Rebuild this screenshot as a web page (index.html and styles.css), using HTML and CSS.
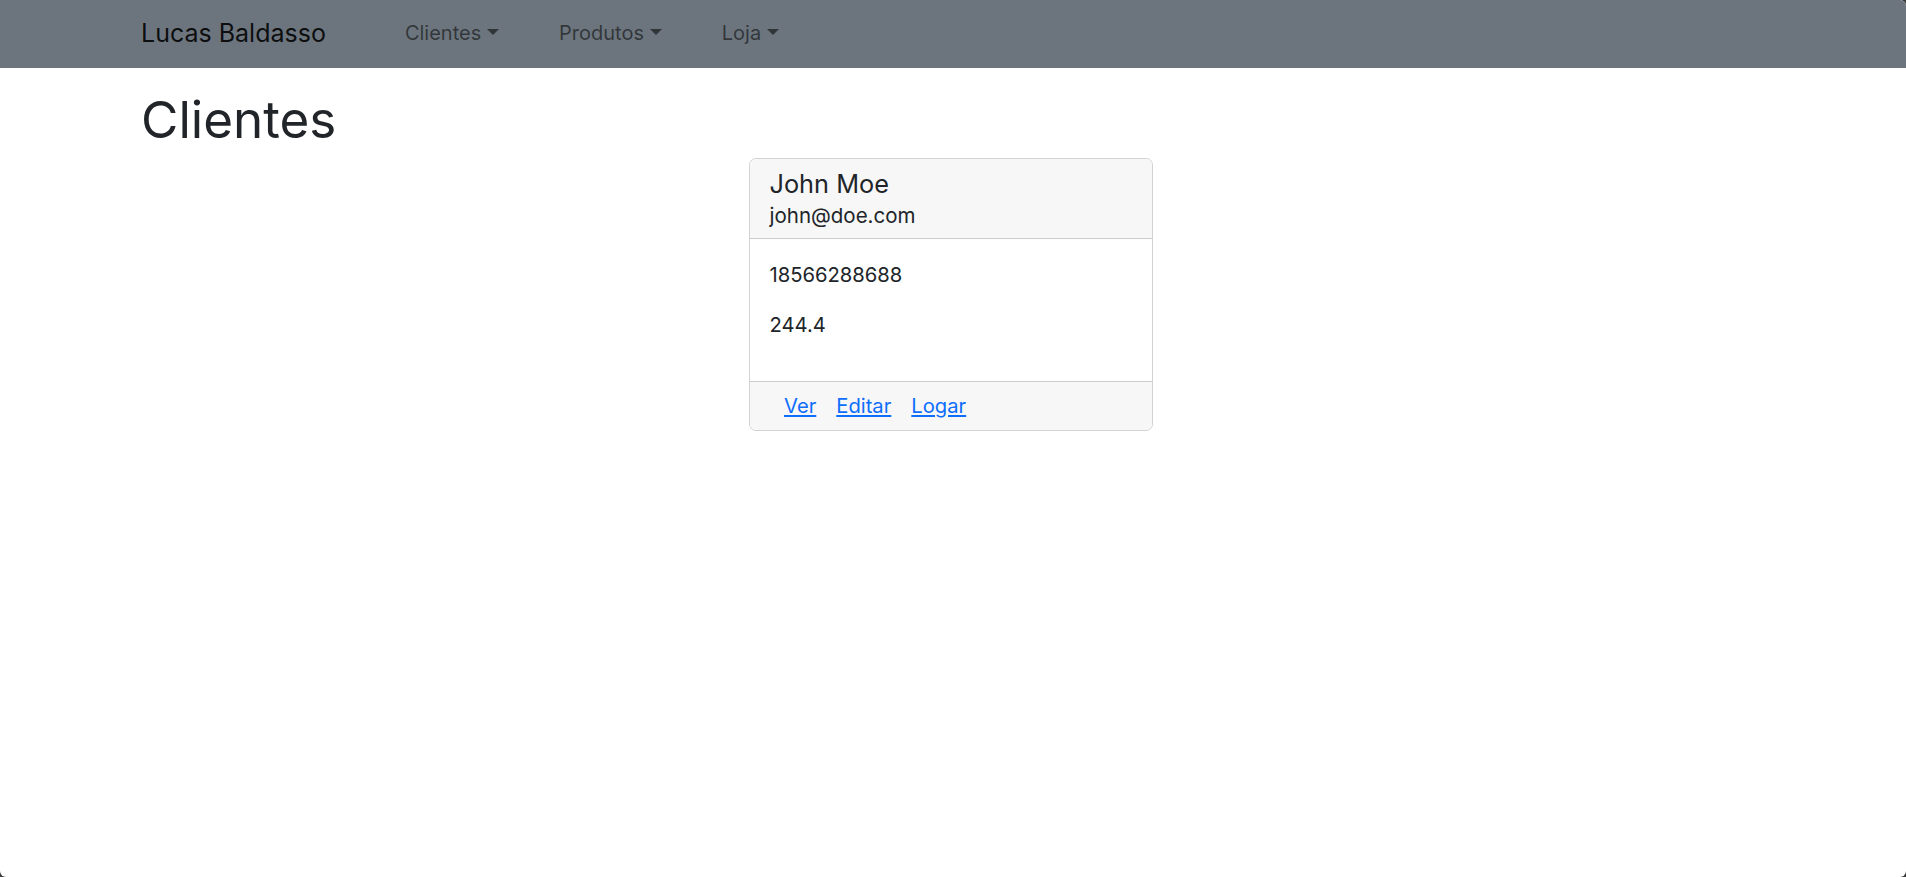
FILE: index.html
```html
<!DOCTYPE html>
<html lang="pt-BR">
<head>
<meta charset="utf-8">
<title>Clientes</title>
<link rel="stylesheet" href="styles.css">
</head>
<body>
<div class="page">
  <nav class="navbar">
    <div class="nav-container">
      <a class="brand" href="#">Lucas Baldasso</a>
      <ul class="nav-links">
        <li><a class="nav-link dropdown-toggle" href="#">Clientes</a></li>
        <li><a class="nav-link dropdown-toggle" href="#">Produtos</a></li>
        <li><a class="nav-link dropdown-toggle" href="#">Loja</a></li>
      </ul>
    </div>
  </nav>
  <main class="main">
    <h1 class="title">Clientes</h1>
    <div class="card-row">
      <div class="card">
        <div class="card-header">
          <h5 class="card-title">John Moe</h5>
          <h6 class="card-subtitle">john@doe.com</h6>
        </div>
        <div class="card-body">
          <p class="card-text">18566288688</p>
          <p class="card-text">244.4</p>
        </div>
        <div class="card-footer">
          <a class="card-link" href="#">Ver</a>
          <a class="card-link" href="#">Editar</a>
          <a class="card-link" href="#">Logar</a>
        </div>
      </div>
    </div>
  </main>
</div>
</body>
</html>
```
FILE: styles.css
```css
html {
  margin: 0;
  padding: 0;
  background: #3a3a3a;
  height: 100%;
}
body {
  margin: 0;
  padding: 0;
  height: 100%;
  font-family: Inter, "Noto Sans", "Liberation Sans", sans-serif;
  color: #212529;
  font-size: 20.2px;
  line-height: 1.5;
}
.page {
  height: 100%;
  background: #fff;
  border-radius: 0 6px 6px 6px;
  overflow: hidden;
}
.navbar {
  background: #6c757d;
  height: 68px;
  box-sizing: border-box;
  padding-bottom: 2px;
  display: flex;
  align-items: center;
}
.nav-container {
  display: flex;
  align-items: center;
  padding-left: 141px;
}
.brand {
  font-size: 25px;
  line-height: 36.5px;
  color: rgba(0, 0, 0, 0.9);
  text-decoration: none;
  margin-right: 79px;
}
.nav-links {
  list-style: none;
  margin: 0;
  padding: 0;
  display: flex;
  gap: 59.8px;
}
.nav-link {
  display: inline-block;
  font-size: 20px;
  color: rgba(0, 0, 0, 0.55);
  text-decoration: none;
  line-height: 29.2px;
}
.dropdown-toggle::after {
  content: "";
  display: inline-block;
  margin-left: 0.3em;
  vertical-align: 0.255em;
  border-top: 0.3em solid;
  border-right: 0.3em solid transparent;
  border-left: 0.3em solid transparent;
  border-bottom: 0;
}
.main {
  padding: 22px 0 0 141px;
}
.title {
  margin: 0 0 9.5px;
  font-size: 51.2px;
  font-weight: 400;
  line-height: 58.3px;
}
.card-row {
  display: flex;
  justify-content: center;
  padding-right: 145px;
}
.card {
  width: 404px;
  box-sizing: border-box;
  border: 1px solid rgba(0, 0, 0, 0.175);
  border-radius: 7px;
  overflow: hidden;
}
.card-header {
  background: #f7f7f7;
  padding: 10px 19.5px 11px;
  border-bottom: 1px solid rgba(0, 0, 0, 0.175);
}
.card-title {
  margin: 0 0 6px;
  font-size: 25.3px;
  font-weight: 400;
  line-height: 29.2px;
}
.card-subtitle {
  margin: 0;
  font-size: 20.5px;
  font-weight: 400;
  line-height: 23.3px;
}
.card-body {
  padding: 20.5px 19.5px 21.5px;
}
.card-text {
  margin: 0 0 20.5px;
  line-height: 29.2px;
}
.card-footer {
  background: #f7f7f7;
  border-top: 1px solid rgba(0, 0, 0, 0.175);
  padding: 9.7px 19.5px 9.7px 34px;
  display: flex;
  gap: 20px;
  line-height: 29.2px;
}
.card-link {
  color: #0d6efd;
  text-decoration: underline;
}
```
